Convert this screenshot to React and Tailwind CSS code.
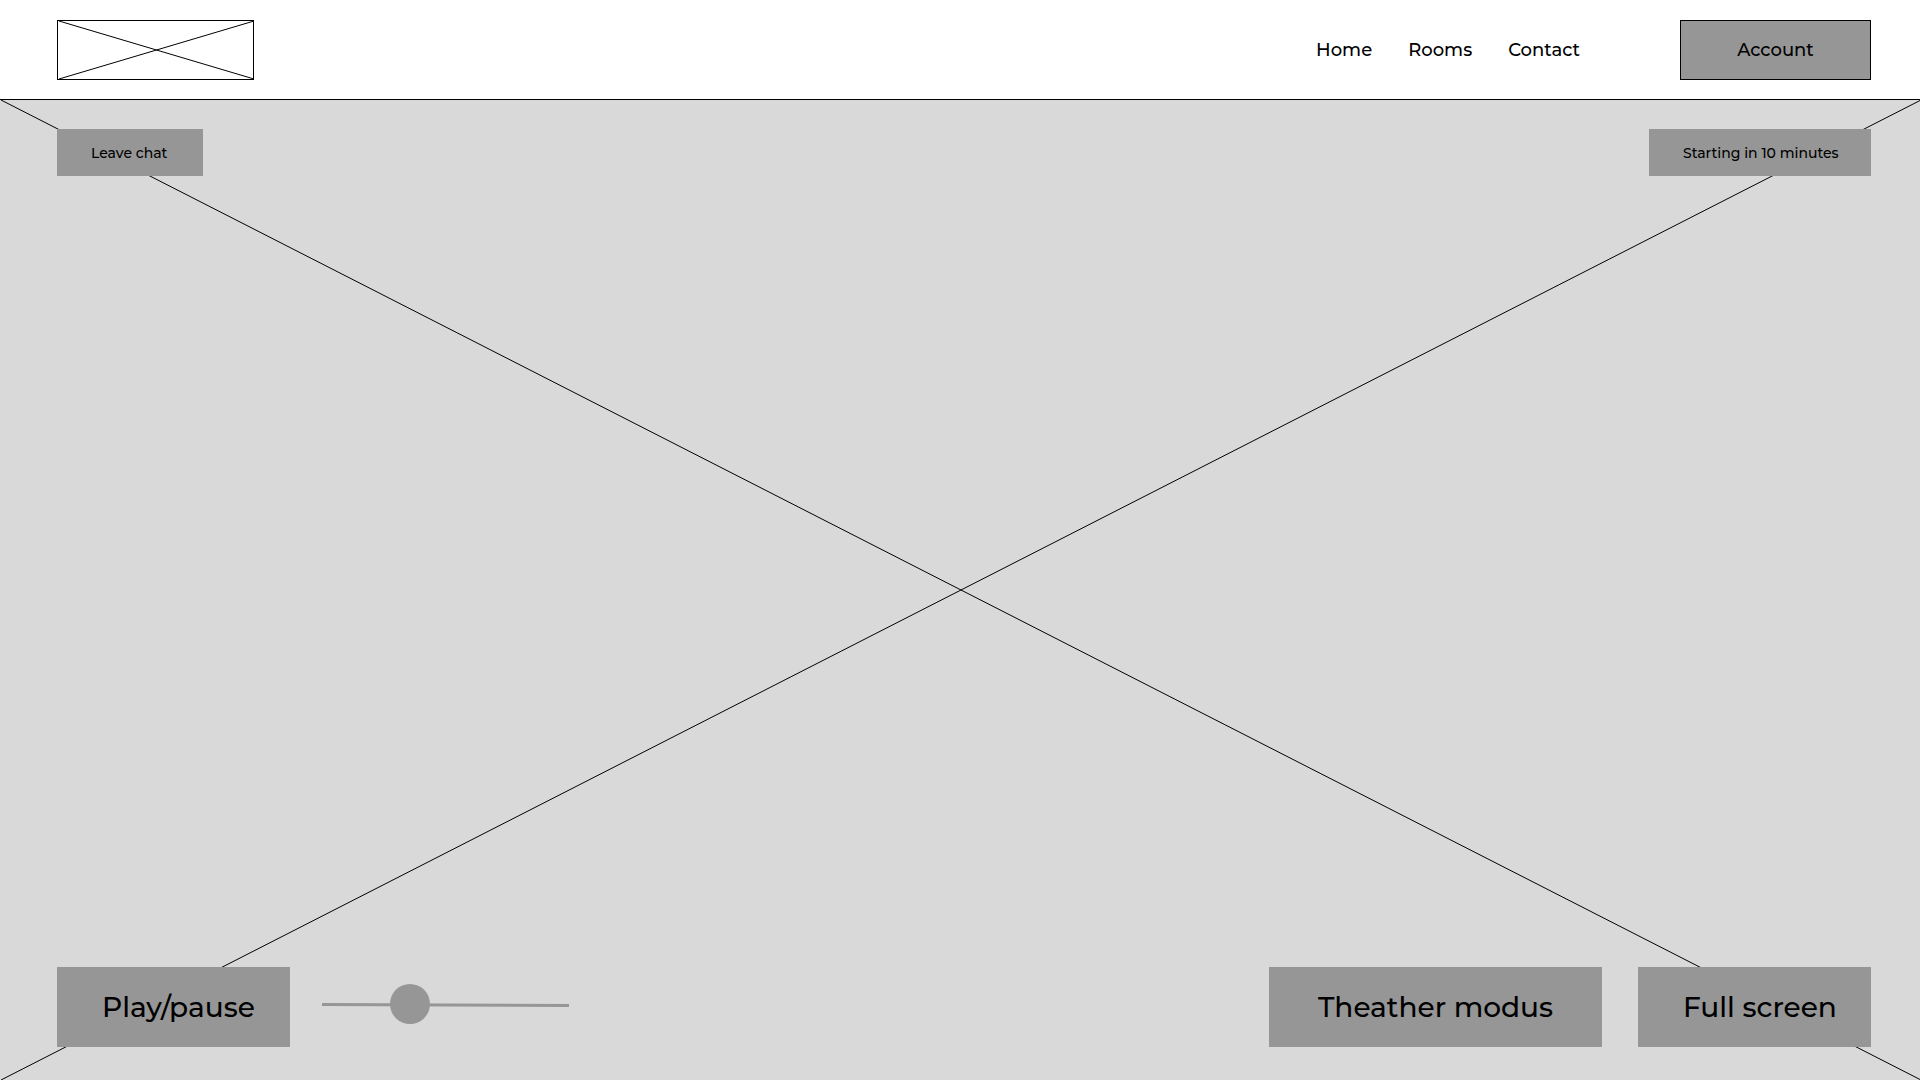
import { useState } from "react";

const links = ["Home", "Rooms", "Contact"];

function Cross({ className }) {
  return (
    <svg className={className} aria-hidden="true" fill="none" stroke="#000">
      <g transform="translate(1 0)">
        <line x1="0" y1="0" x2="100%" y2="100%" />
        <line x1="0" y1="100%" x2="100%" y2="0" />
      </g>
    </svg>
  );
}

function Header() {
  return (
    <header className="flex h-[100px] items-center border-b border-black bg-white pr-[49px] pl-[57px]">
      <a href="#home" aria-label="Logo" className="block h-[60px] w-[197px] border border-black">
        <Cross className="block size-full" />
      </a>
      <nav className="ml-auto flex gap-9 text-lg">
        {links.map((name) => (
          <a key={name} href={"#" + name.toLowerCase()}>
            {name}
          </a>
        ))}
      </nav>
      <button
        type="button"
        className="ml-[100px] h-[60px] w-[191px] border border-black bg-[#969696] text-lg"
      >
        Account
      </button>
    </header>
  );
}

function VolumeSlider() {
  const [value, setValue] = useState(33);
  return (
    <div className="relative mt-[17px] ml-8 h-10 w-[247px] self-start">
      <svg className="absolute inset-0 size-full" viewBox="0 0 247 40" aria-hidden="true">
        <line x1="0" y1="20.5" x2="247" y2="21.5" stroke="#969696" strokeWidth="3" />
      </svg>
      <input
        type="range"
        aria-label="Volume"
        value={value}
        onChange={(e) => setValue(Number(e.target.value))}
        className="relative block h-10 w-full cursor-pointer appearance-none bg-transparent [&::-webkit-slider-thumb]:size-10 [&::-webkit-slider-thumb]:appearance-none [&::-webkit-slider-thumb]:rounded-full [&::-webkit-slider-thumb]:bg-[#969696]"
      />
    </div>
  );
}

export default function App() {
  return (
    <div className="flex min-h-screen flex-col bg-white pr-px pb-px font-['Montserrat','Inter',sans-serif] font-medium text-black">
      <Header />
      <main className="relative flex grow flex-col justify-between bg-[#d9d9d9] pt-[29px] pr-[49px] pb-[33px] pl-[57px]">
        <Cross className="absolute inset-0 size-full" />
        <div className="relative flex items-center justify-between text-sm">
          <button type="button" className="h-[47px] w-[146px] bg-[#969696] pl-[34px] text-left">
            Leave chat
          </button>
          <p className="flex h-[47px] w-[222px] items-center bg-[#969696] pl-[34px]">
            Starting in 10 minutes
          </p>
        </div>
        <div className="relative flex items-center text-[28px] leading-9">
          <button type="button" className="h-20 w-[233px] bg-[#969696] pl-[45px] text-left">
            Play/pause
          </button>
          <VolumeSlider />
          <button type="button" className="ml-auto h-20 w-[333px] bg-[#969696] text-center">
            Theather modus
          </button>
          <button type="button" className="ml-9 h-20 w-[233px] bg-[#969696] pl-[45px] text-left">
            Full screen
          </button>
        </div>
      </main>
    </div>
  );
}
